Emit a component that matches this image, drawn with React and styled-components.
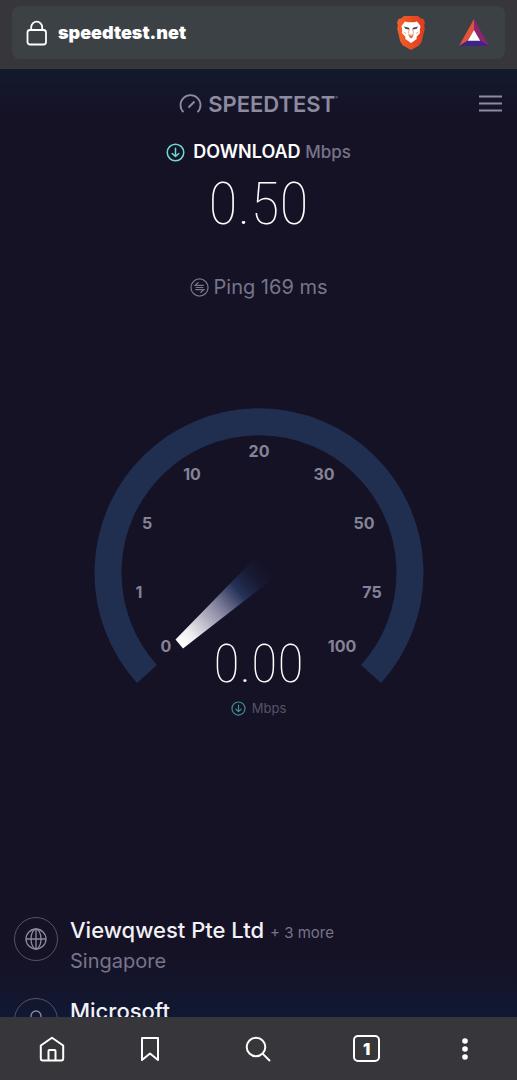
import React from "react";
import styled, { createGlobalStyle } from "styled-components";

const GlobalStyle = createGlobalStyle`
  * {
    box-sizing: border-box;
  }

  body {
    margin: 0;
    background: #151226;
    font-family: "Inter", sans-serif;
  }
`;

// Styled components
const Shell = styled.div`
  display: flex;
  flex-direction: column;
  height: 100vh;
  overflow: hidden;
`;

const BrowserBar = styled.header`
  flex: none;
  padding: 6px 12px 10px;
  background: #37363a;
`;

const AddressPill = styled.div`
  display: flex;
  align-items: center;
  height: 53px;
  padding: 0 16px 0 14px;
  border-radius: 8px;
  background: #3b4144;
`;

const UrlInput = styled.input`
  flex: 1;
  min-width: 0;
  padding: 0;
  margin-left: 10px;
  border: none;
  outline: none;
  background: transparent;
  font-family: "Inter", sans-serif;
  font-weight: 900;
  font-size: 18px;
  line-height: 24px;
  color: #ffffff;
`;

const IconButton = styled.button`
  display: flex;
  align-items: center;
  justify-content: center;
  padding: 0;
  margin: 0;
  border: none;
  background: transparent;
  color: ${(props) => props.$color || "#ffffff"};
  cursor: pointer;
`;

const Extensions = styled.div`
  display: flex;
  align-items: center;
  gap: 33px;
`;

const Page = styled.main`
  flex: 1;
  min-height: 0;
  display: flex;
  flex-direction: column;
  overflow: hidden;
  background: linear-gradient(
    #131a2c 0,
    #151226 48px,
    #151226 calc(100% - 64px),
    #111832 100%
  );
`;

const SiteHeader = styled.div`
  flex: none;
  display: grid;
  grid-template-columns: 1fr auto 1fr;
  align-items: center;
  height: 69px;
  padding: 0 14px;

  > button {
    justify-self: end;
  }
`;

const Logo = styled.a`
  grid-column: 2;
  display: flex;
  align-items: center;
  gap: 6px;
  font-weight: 600;
  font-size: 22px;
  line-height: 24px;
  color: #8d8b9f;
  text-decoration: none;

  sup {
    align-self: flex-start;
    margin-left: -6px;
    font-size: 4px;
    line-height: 12px;
  }
`;

const Metric = styled.div`
  flex: none;
  display: flex;
  align-items: center;
  justify-content: center;
  gap: ${(props) => props.$gap || "8px"};
  margin-top: ${(props) => props.$top || "0"};
  font-size: ${(props) => props.$size};
  line-height: 28px;
  color: ${(props) => props.$color || "#8d8b9f"};
`;

const MetricName = styled.span`
  color: #ffffff;
  font-weight: 600;

  span {
    color: #77758a;
    font-size: 17px;
    font-weight: 500;
  }
`;

const BigNumber = styled.div`
  flex: none;
  font-family: "Roboto Condensed", "Roboto", sans-serif;
  font-weight: 100;
  font-size: ${(props) => props.$size};
  line-height: ${(props) => props.$line};
  text-align: center;
  color: #ffffff;
`;

const Gauge = styled.section`
  flex: none;
  display: grid;
  justify-items: center;
  margin-top: 106px;

  > * {
    grid-area: 1 / 1;
  }
`;

const Dial = styled.svg`
  display: block;
  width: 330px;
  max-width: 100%;
  height: 315px;

  text {
    font-family: "Inter", sans-serif;
    font-weight: 700;
    font-size: 16px;
    fill: #858396;
    text-anchor: middle;
  }
`;

const Readout = styled.div`
  align-self: end;
`;

const Servers = styled.ul`
  flex: none;
  display: flex;
  flex-direction: column;
  gap: 19px;
  margin: 194px 0 0;
  padding: 0 14px;
  list-style: none;
`;

const Server = styled.li`
  display: flex;
  gap: 12px;
`;

const Badge = styled.span`
  flex: none;
  display: flex;
  align-items: center;
  justify-content: center;
  width: 44px;
  height: 44px;
  margin-top: 1px;
  border: 1px solid #55536a;
  border-radius: 50%;
  color: #8d8b9f;
`;

const ServerName = styled.div`
  height: 28px;
  font-weight: 500;
  font-size: 22px;
  line-height: 28px;
  color: #f2f1f6;

  a {
    font-weight: 400;
    font-size: 15px;
    line-height: 16px;
    color: #77758a;
    text-decoration: none;
  }
`;

const ServerPlace = styled.div`
  font-size: 20px;
  line-height: 34px;
  color: #77758a;
`;

const BottomNav = styled.nav`
  flex: none;
  display: grid;
  grid-template-columns: 11fr 10fr 13fr 10fr 11fr;
  height: 63px;
  background: #37363a;
`;

// Icons
const LockIcon = () => (
  <svg width="22" height="26" viewBox="0 0 22 26" fill="none" stroke="#ffffff" strokeWidth="1.8">
    <rect x="1.5" y="10" width="18.5" height="14.5" rx="2.5" />
    <path d="M5.2 10V7.2a5.5 5.5 0 0 1 11 0V10" />
  </svg>
);

const LionIcon = () => (
  <svg width="30" height="36" viewBox="0 0 30 36">
    <defs>
      <linearGradient id="mane" x1="0" x2="1">
        <stop offset="0" stopColor="#f2622a" />
        <stop offset="1" stopColor="#e03a1e" />
      </linearGradient>
    </defs>
    <path
      d="M8 1h14l3 2.500 2.500.5 1.500 3.500-.8 3 .6 3-3 13-2.800 4L15 35l-8-4.500-2.800-4-3-13 .6-3-.8-3L2.500 4 5 3.500z"
      fill="url(#mane)"
    />
    <path
      d="M9 6.500 12 7.200h6l3-.7 3.500 4.500-.7 4 .2 3-3.500 4 .2 2L15 28l-5.700-4 .2-2L6 18l.2-3-.7-4z"
      fill="#ffffff"
    />
    <path d="M8 11.500l5 1.200 .8 2-4.500-1zM22 11.500l-5 1.200-.8 2 4.500-1z" fill="#4b4652" />
    <path d="M13.300 14l-1 4 2.700 2.500 2.700-2.500-1-4" fill="none" stroke="#f3a58a" strokeWidth="1" />
    <path d="M12 19l3 2 3-2-1.500 3.300L15 23.500l-1.500-1.200z" fill="#d96a50" />
    <path d="M7.500 17l2.500 1.500M22.500 17l-2.500 1.500" stroke="#f3a58a" strokeWidth="1" />
  </svg>
);

const TriangleIcon = () => (
  <svg width="30" height="28" viewBox="0 0 30 28">
    <path d="M15 0 0 27l9-5.500L15 11z" fill="#e4513d" />
    <path d="M15 0v11l6 10.500 9 5.500z" fill="#8d2470" />
    <path d="M0 27h30l-9-5.500H9z" fill="#3f2389" />
    <path d="M15 11 8.800 21.800h12.400z" fill="#ffffff" />
  </svg>
);

const GaugeMark = () => (
  <svg width="23" height="22" viewBox="0 0 23 22" fill="none" stroke="currentColor" strokeWidth="1.800">
    <path d="M4.500 19.200A10 10 0 1 1 18.500 19.200" />
    <path d="M9.500 14.500l6-6" strokeWidth="2" />
  </svg>
);

const MenuIcon = () => (
  <svg width="25" height="20" viewBox="0 0 25 20" stroke="currentColor" strokeWidth="1.800">
    <path d="M1 2.500h23M1 9.500h23M1 16.500h23" />
  </svg>
);

const DownIcon = ({ size, color }) => (
  <svg
    width={size}
    height={size}
    viewBox="0 0 20 20"
    fill="none"
    stroke={color}
    strokeWidth="1.600"
    strokeLinecap="round"
    strokeLinejoin="round"
  >
    <circle cx="10" cy="10" r="8.700" />
    <path d="M10 5.500v8.500M6.500 11l3.500 3.200 3.500-3.200" />
  </svg>
);

const PingIcon = () => (
  <svg width="19" height="19" viewBox="0 0 20 20" fill="none" stroke="currentColor" strokeWidth="1.300">
    <circle cx="10" cy="10" r="9" />
    <path d="M14.500 7.700H5.500L9 4.500M6 10h8M5.500 12.300h9L11 15.500" />
  </svg>
);

const GlobeIcon = () => (
  <svg width="22" height="22" viewBox="0 0 22 22" fill="none" stroke="currentColor" strokeWidth="1.300">
    <circle cx="11" cy="11" r="10" />
    <ellipse cx="11" cy="11" rx="5" ry="10" />
    <path d="M1 11h20M11 1v20" />
  </svg>
);

const UserIcon = () => (
  <svg width="22" height="22" viewBox="0 0 22 22" fill="none" stroke="currentColor" strokeWidth="1.300">
    <circle cx="11" cy="7" r="5" />
    <path d="M2 22a9 9 0 0 1 18 0" />
  </svg>
);

const HomeIcon = () => (
  <svg width="26" height="26" viewBox="0 0 26 26" fill="none" stroke="currentColor" strokeWidth="2" strokeLinejoin="round">
    <path d="M1.800 9.500 13 1.800l11.200 7.700v13a2 2 0 0 1-2 2H3.800a2 2 0 0 1-2-2z" />
    <path d="M9.500 24.500V15a1 1 0 0 1 1-1h5a1 1 0 0 1 1 1v9.500" />
  </svg>
);

const BookmarkIcon = () => (
  <svg width="20" height="26" viewBox="0 0 20 26" fill="none" stroke="currentColor" strokeWidth="2" strokeLinejoin="round">
    <path d="M2 2h16v22l-8-6.500L2 24z" />
  </svg>
);

const SearchIcon = () => (
  <svg width="26" height="26" viewBox="0 0 26 26" fill="none" stroke="currentColor" strokeWidth="2">
    <circle cx="11" cy="11" r="9.300" />
    <path d="M17.600 17.600 25 25" />
  </svg>
);

const TabCount = styled.span`
  display: flex;
  align-items: center;
  justify-content: center;
  width: 27px;
  height: 27px;
  border: 2px solid #ffffff;
  border-radius: 5px;
  font-family: "Inter", sans-serif;
  font-weight: 900;
  font-size: 16px;
  line-height: 20px;
`;

const DotsIcon = () => (
  <svg width="6" height="22" viewBox="0 0 6 22" fill="currentColor">
    <circle cx="3" cy="3" r="2.800" />
    <circle cx="3" cy="11" r="2.800" />
    <circle cx="3" cy="19" r="2.800" />
  </svg>
);

const ticks = [
  { label: "0", x: 72, y: 245 },
  { label: "1", x: 45, y: 191 },
  { label: "5", x: 53, y: 122 },
  { label: "10", x: 98, y: 73 },
  { label: "20", x: 165, y: 50 },
  { label: "30", x: 230, y: 73 },
  { label: "50", x: 270, y: 122 },
  { label: "75", x: 278, y: 191 },
  { label: "100", x: 248, y: 245 },
];

const SpeedDial = () => (
  <Dial viewBox="0 0 330 315">
    <defs>
      <linearGradient id="needle" gradientUnits="userSpaceOnUse" x1="86" y1="236" x2="172" y2="160">
        <stop offset="0" stopColor="#ffffff" />
        <stop offset="0.12" stopColor="#eeedf1" />
        <stop offset="0.45" stopColor="#8685a0" />
        <stop offset="0.68" stopColor="#253258" />
        <stop offset="1" stopColor="#151a35" stopOpacity="0" />
      </linearGradient>
    </defs>
    {/* Track */}
    <path d="M53 267A151 151 0 1 1 277 267" fill="none" stroke="#202e50" strokeWidth="27" />
    {ticks.map((tick) => (
      <text key={tick.label} x={tick.x} y={tick.y}>
        {tick.label}
      </text>
    ))}
    <path d="M81.500 232.500 162 150 181 170 89 241.500z" fill="url(#needle)" />
  </Dial>
);

const App = () => {
  return (
    <Shell>
      <GlobalStyle />
      <BrowserBar>
        <AddressPill>
          <LockIcon />
          <UrlInput aria-label="Address" defaultValue="speedtest.net" />
          <Extensions>
            <IconButton aria-label="Shields">
              <LionIcon />
            </IconButton>
            <IconButton aria-label="Rewards">
              <TriangleIcon />
            </IconButton>
          </Extensions>
        </AddressPill>
      </BrowserBar>

      <Page>
        <SiteHeader>
          <Logo href="#">
            <GaugeMark />
            SPEEDTEST
            <sup>®</sup>
          </Logo>
          <IconButton aria-label="Menu" $color="#8d8b9f">
            <MenuIcon />
          </IconButton>
        </SiteHeader>

        <Metric $size="18px">
          <DownIcon size={19} color="#6fd9d0" />
          <MetricName>
            DOWNLOAD <span>Mbps</span>
          </MetricName>
        </Metric>
        <BigNumber $size="60px" $line="76px">
          0.50
        </BigNumber>
        <Metric $size="20px" $top="31px" $gap="5px" $color="#77758a">
          <PingIcon />
          <span>Ping 169 ms</span>
        </Metric>

        <Gauge>
          <SpeedDial />
          <Readout>
            <BigNumber $size="54px" $line="60px">
              0.00
            </BigNumber>
            <Metric $size="13px" $gap="6px" $color="#55536a">
              <DownIcon size={15} color="#3f8f92" />
              <span>Mbps</span>
            </Metric>
          </Readout>
        </Gauge>

        <Servers>
          <Server>
            <Badge>
              <GlobeIcon />
            </Badge>
            <div>
              <ServerName>
                Viewqwest Pte Ltd <a href="#">+ 3 more</a>
              </ServerName>
              <ServerPlace>Singapore</ServerPlace>
            </div>
          </Server>
          <Server>
            <Badge>
              <UserIcon />
            </Badge>
            <ServerName>Microsoft</ServerName>
          </Server>
        </Servers>
      </Page>

      {/* Browser toolbar */}
      <BottomNav>
        <IconButton aria-label="Home">
          <HomeIcon />
        </IconButton>
        <IconButton aria-label="Bookmarks">
          <BookmarkIcon />
        </IconButton>
        <IconButton aria-label="Search">
          <SearchIcon />
        </IconButton>
        <IconButton aria-label="Tabs">
          <TabCount>1</TabCount>
        </IconButton>
        <IconButton aria-label="More">
          <DotsIcon />
        </IconButton>
      </BottomNav>
    </Shell>
  );
};

export default App;
